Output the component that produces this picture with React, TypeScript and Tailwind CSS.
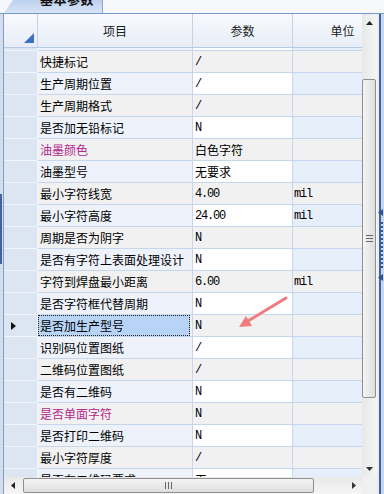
type Row = {
  name: string;
  value: string;
  unit?: string;
  pink?: boolean;
  selected?: boolean;
};

const rows: Row[] = [
  { name: "快捷标记", value: "/" },
  { name: "生产周期位置", value: "/" },
  { name: "生产周期格式", value: "/" },
  { name: "是否加无铅标记", value: "N" },
  { name: "油墨颜色", value: "白色字符", pink: true },
  { name: "油墨型号", value: "无要求" },
  { name: "最小字符线宽", value: "4.00", unit: "mil" },
  { name: "最小字符高度", value: "24.00", unit: "mil" },
  { name: "周期是否为阴字", value: "N" },
  { name: "是否有字符上表面处理设计", value: "N" },
  { name: "字符到焊盘最小距离", value: "6.00", unit: "mil" },
  { name: "是否字符框代替周期", value: "N" },
  { name: "是否加生产型号", value: "N", selected: true },
  { name: "识别码位置图纸", value: "/" },
  { name: "二维码位置图纸", value: "/" },
  { name: "是否有二维码", value: "N" },
  { name: "是否单面字符", value: "N", pink: true },
  { name: "是否打印二维码", value: "N" },
  { name: "最小字符厚度", value: "/" },
  { name: "是否有二维码要求", value: "无" },
];

const cjk = "font-['Noto_Sans_CJK_SC',sans-serif]";
const mono = "font-['Liberation_Mono','Noto_Sans_CJK_SC',monospace] text-[12px] tracking-[-1.2px]";
const cols = "grid grid-cols-[34px_155px_100px_100px]";

function Tab() {
  return (
    <div className="flex h-[13px] bg-[#f4f7fc]">
      <div className="w-[4px] bg-[#f4f7fc]" />
      <div className="relative w-[99px] h-[13px] overflow-hidden bg-gradient-to-b from-[#bcd0ee] to-[#d9e5f6] border-r border-[#8ea8cf] [clip-path:polygon(9px_0,100%_0,100%_100%,0_100%)]">
        <span className={`absolute left-[36px] top-[-10px] text-[13px] font-bold leading-[18px] text-[#111] tracking-[0.5px] ${cjk}`}>
          基本参数
        </span>
      </div>
      <div className="flex-1 bg-[#f6f8fc]" />
    </div>
  );
}

function Header() {
  return (
    <div className={`${cols} h-[34px] shrink-0 bg-gradient-to-b from-[#f8fafd] to-[#e7edf7] border-b border-[#b9cbe4] text-[12px] text-[#1b1b1b] ${cjk}`}>
      <div className="relative border-r border-[#c4d3e8]">
        <svg className="absolute right-[3px] bottom-[4px]" width="10" height="10" viewBox="0 0 10 10">
          <polygon points="10,0 10,10 0,10" fill="#3d6fc6" />
        </svg>
      </div>
      <div className="flex items-center justify-center border-r border-[#c4d3e8]">项目</div>
      <div className="flex items-center justify-center border-r border-[#c4d3e8]">参数</div>
      <div className="flex items-center justify-center border-r border-[#c4d3e8]">单位</div>
    </div>
  );
}

function GridRow({ row, i }: { row: Row; i: number }) {
  const odd = i % 2 === 0;
  const line = "border-b border-r border-[#c6d6ec]";
  const isMono = /^[0-9A-Za-z./]+$/.test(row.value);
  return (
    <div className={`${cols} h-[22px] shrink-0 text-[12px] leading-none text-black`}>
      <div className="flex items-center pl-[7px] bg-[#dce6f3] border-b border-r border-[#f3f6fb]">
        {row.selected && (
          <svg width="5" height="8" viewBox="0 0 5 8">
            <polygon points="0,0 5,4 0,8" fill="#111" />
          </svg>
        )}
      </div>
      <div className={`${line} flex items-center pl-[2px] whitespace-nowrap overflow-hidden ${cjk} ${row.pink ? "text-[#b3278c]" : ""} ${odd ? "bg-[#f1f1f1]" : "bg-[#eef3fb]"}`}>
        <div
          className={`flex items-center h-full w-full ${row.selected ? "bg-[#b7d4f6] border border-dotted border-[#222] -ml-[2px] pl-[1px]" : ""}`}
        >
          {row.name}
        </div>
      </div>
      <div className={`${line} flex items-center pl-[2px] whitespace-nowrap ${isMono ? mono : cjk} ${odd ? "bg-[#f1f1f1]" : "bg-white"}`}>
        {row.value}
      </div>
      <div className={`${line} flex items-center pl-[1px] ${mono} ${odd ? "bg-[#f1f1f1]" : "bg-[#e6eefa]"}`}>
        {row.unit ?? ""}
      </div>
    </div>
  );
}

function Grid() {
  return (
    <div className="flex-1 min-h-0 overflow-hidden flex flex-col bg-white">
      <Header />
      <div className="flex-1 min-h-0 overflow-hidden">
        <div className={`${cols} h-[3px]`}>
          <div className="bg-[#dce6f3] border-b border-r border-[#f3f6fb]" />
          <div className="bg-[#eef3fb] border-b border-r border-[#c6d6ec]" />
          <div className="bg-white border-b border-r border-[#c6d6ec]" />
          <div className="bg-[#e6eefa] border-b border-r border-[#c6d6ec]" />
        </div>
        {rows.map((r, i) => (
          <GridRow key={r.name} row={r} i={i} />
        ))}
      </div>
    </div>
  );
}

function VScroll() {
  return (
    <div className="flex-1 min-h-0 flex flex-col bg-gradient-to-r from-[#e8e8e8] to-[#f6f6f6]">
      <div className="h-[17px] flex items-center justify-center shrink-0">
        <svg width="7" height="4" viewBox="0 0 7 4">
          <polygon points="0,4 7,4 3.5,0" fill="#222" />
        </svg>
      </div>
      <div className="mt-[48px] h-[319px] w-[14px] shrink-0 rounded-[2px] border border-[#8f8f8f] bg-gradient-to-r from-[#f4f4f4] to-[#dedede] flex flex-col items-center justify-center gap-[2px]">
        <div className="h-px w-[7px] bg-[#666]" />
        <div className="h-px w-[7px] bg-[#666]" />
        <div className="h-px w-[7px] bg-[#666]" />
      </div>
      <div className="flex-1" />
      <div className="h-[17px] flex items-center justify-center shrink-0">
        <svg width="7" height="4" viewBox="0 0 7 4">
          <polygon points="0,0 7,0 3.5,4" fill="#333" />
        </svg>
      </div>
    </div>
  );
}

function HScroll() {
  return (
    <div className="h-[17px] shrink-0 flex items-center bg-gradient-to-b from-[#e9e9e9] to-[#f6f6f6]">
      <div className="w-[17px] h-full flex items-center justify-center shrink-0">
        <svg width="4" height="7" viewBox="0 0 4 7">
          <polygon points="4,0 4,7 0,3.5" fill="#222" />
        </svg>
      </div>
      <div className="ml-[2px] w-[291px] h-[15px] shrink-0 rounded-[2px] border border-[#8f8f8f] bg-gradient-to-b from-[#f4f4f4] to-[#dedede] flex items-center justify-center gap-[2px]">
        <div className="w-px h-[7px] bg-[#666]" />
        <div className="w-px h-[7px] bg-[#666]" />
        <div className="w-px h-[7px] bg-[#666]" />
      </div>
      <div className="flex-1" />
      <div className="w-[17px] h-full flex items-center justify-center shrink-0">
        <svg width="4" height="7" viewBox="0 0 4 7">
          <polygon points="0,0 0,7 4,3.5" fill="#333" />
        </svg>
      </div>
    </div>
  );
}

function RightEdge() {
  return (
    <div className="relative w-[7px] flex">
      <div className="w-[2px] bg-[#e9eef6]" />
      <div className="w-[2px] bg-[#3f63a0]" />
      <div className="flex-1 bg-[#c9d7ec]" />
      <div className="absolute left-[1px] top-[195px] flex flex-col items-center gap-[2px]">
        <svg width="5" height="7" viewBox="0 0 5 7">
          <polygon points="5,0 5,7 0,3.5" fill="#2f5596" />
        </svg>
        <div className="h-[2px]" />
        {Array.from({ length: 12 }).map((_, k) => (
          <div key={k} className="ml-[3px] w-[2px] h-[2px] bg-[#2f5596]" />
        ))}
        <div className="h-[2px]" />
        <svg width="5" height="7" viewBox="0 0 5 7">
          <polygon points="5,0 5,7 0,3.5" fill="#2f5596" />
        </svg>
      </div>
    </div>
  );
}

function LeftEdge() {
  return (
    <div className="relative w-[4px] flex">
      <div className="w-[3px] bg-[#d4deec]" />
      <div className="w-px bg-[#7f9cc7]" />
      <div className="absolute left-0 top-[180px] w-[2px] h-[70px] bg-[#3f63a0]" />
    </div>
  );
}

function Arrow() {
  return (
    <svg className="absolute left-0 top-0 pointer-events-none" width="384" height="494">
      <line x1="286" y1="298" x2="248" y2="321" stroke="#ef7c7c" strokeWidth="3" strokeLinecap="round" />
      <polygon points="239,327 252,326 246,316" fill="#ef7c7c" />
    </svg>
  );
}

export default function App() {
  return (
    <div className="relative w-[384px] h-[494px] overflow-hidden flex flex-col bg-[#f4f7fc]">
      <Tab />
      <div className="h-px bg-[#7398cd]" />
      <div className="flex flex-1 min-h-0">
        <LeftEdge />
        <div className="w-[358px] flex flex-col">
          <Grid />
          <HScroll />
        </div>
        <div className="w-[15px] flex flex-col">
          <VScroll />
          <div className="h-[17px] bg-[#f0f0f0]" />
        </div>
        <RightEdge />
      </div>
      <Arrow />
    </div>
  );
}
